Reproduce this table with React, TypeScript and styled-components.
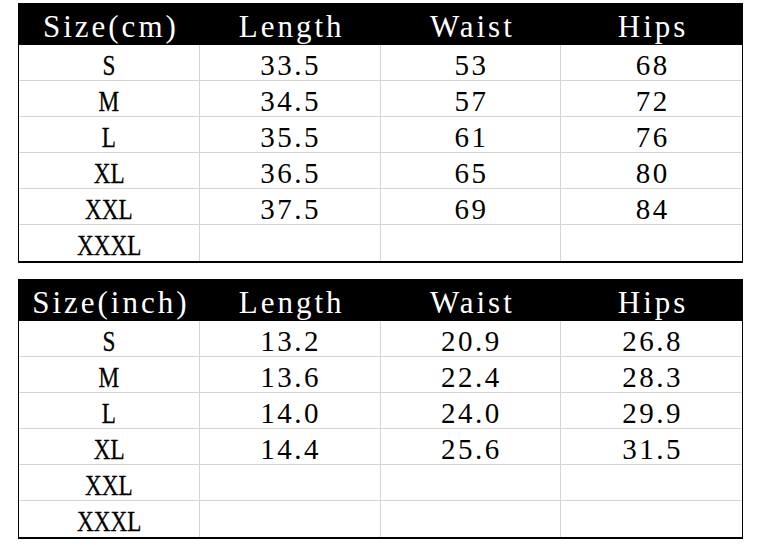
import styled, { createGlobalStyle } from "styled-components";

const GlobalStyle = createGlobalStyle`
  html, body {
    margin: 0;
    padding: 0;
    background: #ffffff;
  }
  body {
    font-family: "Liberation Serif", "Times New Roman", serif;
    color: #000000;
  }
`;

const Page = styled.div`
  display: flex;
  flex-direction: column;
  gap: 16px;
  padding: 3px 0 0 18px;
  width: 725px;
`;

const Table = styled.div`
  width: 725px;
  box-sizing: border-box;
  border-left: 1px solid #000;
  border-right: 1px solid #000;
  border-bottom: 2px solid #000;
`;

const HeaderRow = styled.div`
  display: grid;
  grid-template-columns: repeat(4, 1fr);
  height: 42px;
  background: #000;
  margin: 0 -1px;
  padding: 0 1px;
`;

const HeaderCell = styled.div`
  box-sizing: border-box;
  height: 42px;
  padding-top: 6px;
  padding-left: 3px;
  line-height: 36px;
  text-align: center;
  color: #fff;
  font-size: 31px;
  letter-spacing: 3px;
  white-space: nowrap;
`;

const Row = styled.div<{ $last?: boolean }>`
  display: grid;
  grid-template-columns: repeat(4, 1fr);
  height: 36px;
  box-sizing: border-box;
  border-bottom: ${(p) => (p.$last ? "none" : "1px solid #d4d4d4")};
`;

const Cell = styled.div`
  box-sizing: border-box;
  padding-top: 5px;
  padding-left: 2px;
  line-height: 30px;
  text-align: center;
  font-size: 29px;
  letter-spacing: 2.5px;
  white-space: nowrap;
  border-right: 1px solid #d4d4d4;
  &:last-child {
    border-right: none;
  }
`;

const Label = styled.span`
  display: inline-block;
  letter-spacing: 0;
  margin-left: -2px;
  transform: scaleX(0.8);
  -webkit-text-stroke: 0.3px #000;
`;

type Unit = { label: string; rows: [string, string, string, string][] };

const tables: Unit[] = [
  {
    label: "Size(cm)",
    rows: [
      ["S", "33.5", "53", "68"],
      ["M", "34.5", "57", "72"],
      ["L", "35.5", "61", "76"],
      ["XL", "36.5", "65", "80"],
      ["XXL", "37.5", "69", "84"],
      ["XXXL", "", "", ""],
    ],
  },
  {
    label: "Size(inch)",
    rows: [
      ["S", "13.2", "20.9", "26.8"],
      ["M", "13.6", "22.4", "28.3"],
      ["L", "14.0", "24.0", "29.9"],
      ["XL", "14.4", "25.6", "31.5"],
      ["XXL", "", "", ""],
      ["XXXL", "", "", ""],
    ],
  },
];

const SizeTable = ({ label, rows }: Unit) => (
  <Table>
    <HeaderRow>
      <HeaderCell>{label}</HeaderCell>
      <HeaderCell>Length</HeaderCell>
      <HeaderCell>Waist</HeaderCell>
      <HeaderCell>Hips</HeaderCell>
    </HeaderRow>
    {rows.map((r, i) => (
      <Row key={r[0]} $last={i === rows.length - 1}>
        <Cell>
          <Label>{r[0]}</Label>
        </Cell>
        <Cell>{r[1]}</Cell>
        <Cell>{r[2]}</Cell>
        <Cell>{r[3]}</Cell>
      </Row>
    ))}
  </Table>
);

export default function App() {
  return (
    <>
      <GlobalStyle />
      <Page>
        {tables.map((t) => (
          <SizeTable key={t.label} {...t} />
        ))}
      </Page>
    </>
  );
}
